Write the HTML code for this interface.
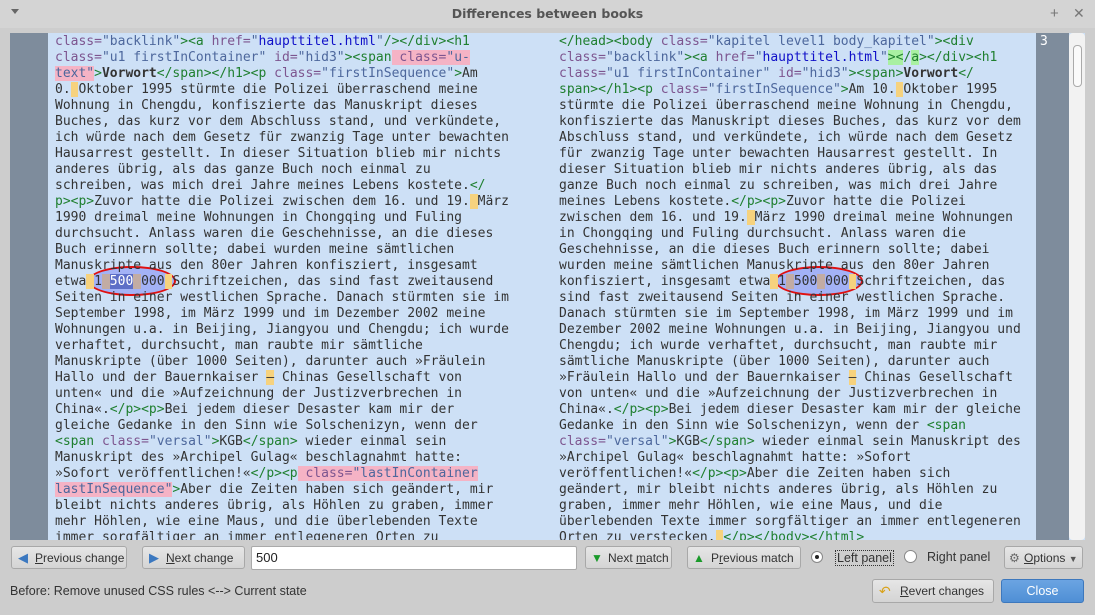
<!DOCTYPE html>
<html><head><meta charset="utf-8">
<style>
body{margin:0;width:1095px;height:615px;background:#cdcdcd;font-family:"Liberation Sans",sans-serif;overflow:hidden;position:relative}
.title{position:absolute;left:0;top:0;width:1095px;height:28px;background:#d4d4d4;text-align:center;font:bold 12.5px "DejaVu Sans",sans-serif;color:#555;line-height:27px}
.ed{position:absolute;left:10px;top:33px;width:1075px;height:507px;background:#cde0f6;overflow:hidden}
.g{position:absolute;top:0;height:507px;background:#7e8c9c}
pre{position:absolute;top:1px;margin:0;font-family:"DejaVu Sans Mono",monospace;font-size:13px;line-height:16px;color:#333}
.t{color:#1f7f2f}.a{color:#7d558f}.s{color:#4d679c}.h{color:#1010c8}
.y{background:#f6d27e}.p{background:#f5b3c5}.gr{background:#a9f0a2}.tan{background:#c2aca4}.sel{background:#5e6fc7;color:#fff}
.ell{position:absolute;width:84px;height:26px;border:2px solid #e01010;border-radius:50%;background:rgba(130,140,245,.55)}
.btn{position:absolute;top:546px;height:23px;border:1px solid #a8a8a8;border-radius:3px;background:linear-gradient(#e6e6e6,#d4d4d4);font-size:12px;color:#333;line-height:22px;box-sizing:border-box;white-space:nowrap}
.lbl{position:absolute;font-size:12.5px;color:#333;white-space:nowrap}
</style></head><body>
<div class="title">Differences between books</div>
<div style="position:absolute;left:11px;top:9px;width:0;height:0;border-left:4px solid transparent;border-right:4px solid transparent;border-top:5px solid #666"></div>
<div style="position:absolute;left:1050px;top:5px;font-size:15px;color:#777">+</div>
<div style="position:absolute;left:1073px;top:5px;font-size:14px;color:#777">✕</div>
<div class="ed">
<div class="g" style="left:0;width:38px"></div>
<div class="g" style="left:1026px;width:33px"><span style="position:absolute;left:4px;top:1px;color:#fff;font:13px 'DejaVu Sans Mono',monospace">3</span></div>
<div style="position:absolute;left:1059px;top:0;width:16px;height:507px;background:#f2f2f2;border-radius:4px"><div style="position:absolute;left:4px;top:12px;width:7px;height:40px;border:1px solid #aaa;border-radius:4px;background:#fafafa"></div></div>
<div class="ell" style="left:78px;top:233px"></div>
<div class="ell" style="left:765px;top:233px"></div>
<pre style="left:45px"><span class="a">class=</span><span class="s">"backlink"</span><span class="t">&gt;&lt;a</span> <span class="a">href=</span><span class="s">"</span><span class="h">haupttitel.html</span><span class="s">"</span><span class="t">/&gt;&lt;/div&gt;&lt;h1</span>
<span class="a">class=</span><span class="s">"u1 firstInContainer"</span> <span class="a">id=</span><span class="s">"hid3"</span><span class="t">&gt;&lt;span</span><span class="p"> <span class="a">class=</span><span class="s">"u-</span></span>
<span class="p"><span class="s">text"</span></span><span class="t">&gt;</span><b>Vorwort</b><span class="t">&lt;/span&gt;&lt;/h1&gt;&lt;p</span> <span class="a">class=</span><span class="s">"firstInSequence"</span><span class="t">&gt;</span>Am
0.<span class="y"> </span>Oktober 1995 stürmte die Polizei überraschend meine
Wohnung in Chengdu, konfiszierte das Manuskript dieses
Buches, das kurz vor dem Abschluss stand, und verkündete,
ich würde nach dem Gesetz für zwanzig Tage unter bewachten
Hausarrest gestellt. In dieser Situation blieb mir nichts
anderes übrig, als das ganze Buch noch einmal zu
schreiben, was mich drei Jahre meines Lebens kostete.<span class="t">&lt;/</span>
<span class="t">p&gt;&lt;p&gt;</span>Zuvor hatte die Polizei zwischen dem 16. und 19.<span class="y"> </span>März
1990 dreimal meine Wohnungen in Chongqing und Fuling
durchsucht. Anlass waren die Geschehnisse, an die dieses
Buch erinnern sollte; dabei wurden meine sämtlichen
Manuskripte aus den 80er Jahren konfisziert, insgesamt
etwa<span class="y"> </span>1<span class="tan"> </span><span class="sel">500</span><span class="tan"> </span>000<span class="y"> </span>Schriftzeichen, das sind fast zweitausend
Seiten in einer westlichen Sprache. Danach stürmten sie im
September 1998, im März 1999 und im Dezember 2002 meine
Wohnungen u.a. in Beijing, Jiangyou und Chengdu; ich wurde
verhaftet, durchsucht, man raubte mir sämtliche
Manuskripte (über 1000 Seiten), darunter auch »Fräulein
Hallo und der Bauernkaiser <span class="y">–</span> Chinas Gesellschaft von
unten« und die »Aufzeichnung der Justizverbrechen in
China«.<span class="t">&lt;/p&gt;&lt;p&gt;</span>Bei jedem dieser Desaster kam mir der
gleiche Gedanke in den Sinn wie Solschenizyn, wenn der
<span class="t">&lt;span</span> <span class="a">class=</span><span class="s">"versal"</span><span class="t">&gt;</span>KGB<span class="t">&lt;/span&gt;</span> wieder einmal sein
Manuskript des »Archipel Gulag« beschlagnahmt hatte:
»Sofort veröffentlichen!«<span class="t">&lt;/p&gt;&lt;p</span><span class="p"> <span class="a">class=</span><span class="s">"lastInContainer</span></span>
<span class="p"><span class="s">lastInSequence"</span></span><span class="t">&gt;</span>Aber die Zeiten haben sich geändert, mir
bleibt nichts anderes übrig, als Höhlen zu graben, immer
mehr Höhlen, wie eine Maus, und die überlebenden Texte
immer sorgfältiger an immer entlegeneren Orten zu</pre>
<pre style="left:549px"><span class="t">&lt;/head&gt;&lt;body</span> <span class="a">class=</span><span class="s">"kapitel level1 body_kapitel"</span><span class="t">&gt;&lt;div</span>
<span class="a">class=</span><span class="s">"backlink"</span><span class="t">&gt;&lt;a</span> <span class="a">href=</span><span class="s">"</span><span class="h">haupttitel.html</span><span class="s">"</span><span class="t gr">&gt;&lt;</span><span class="t">/</span><span class="t gr">a</span><span class="t">&gt;&lt;/div&gt;&lt;h1</span>
<span class="a">class=</span><span class="s">"u1 firstInContainer"</span> <span class="a">id=</span><span class="s">"hid3"</span><span class="t">&gt;&lt;span&gt;</span><b>Vorwort</b><span class="t">&lt;/</span>
<span class="t">span&gt;&lt;/h1&gt;&lt;p</span> <span class="a">class=</span><span class="s">"firstInSequence"</span><span class="t">&gt;</span>Am 10.<span class="y"> </span>Oktober 1995
stürmte die Polizei überraschend meine Wohnung in Chengdu,
konfiszierte das Manuskript dieses Buches, das kurz vor dem
Abschluss stand, und verkündete, ich würde nach dem Gesetz
für zwanzig Tage unter bewachten Hausarrest gestellt. In
dieser Situation blieb mir nichts anderes übrig, als das
ganze Buch noch einmal zu schreiben, was mich drei Jahre
meines Lebens kostete.<span class="t">&lt;/p&gt;&lt;p&gt;</span>Zuvor hatte die Polizei
zwischen dem 16. und 19.<span class="y"> </span>März 1990 dreimal meine Wohnungen
in Chongqing und Fuling durchsucht. Anlass waren die
Geschehnisse, an die dieses Buch erinnern sollte; dabei
wurden meine sämtlichen Manuskripte aus den 80er Jahren
konfisziert, insgesamt etwa<span class="y"> </span>1<span class="tan"> </span>500<span class="tan"> </span>000<span class="y"> </span>Schriftzeichen, das
sind fast zweitausend Seiten in einer westlichen Sprache.
Danach stürmten sie im September 1998, im März 1999 und im
Dezember 2002 meine Wohnungen u.a. in Beijing, Jiangyou und
Chengdu; ich wurde verhaftet, durchsucht, man raubte mir
sämtliche Manuskripte (über 1000 Seiten), darunter auch
»Fräulein Hallo und der Bauernkaiser <span class="y">–</span> Chinas Gesellschaft
von unten« und die »Aufzeichnung der Justizverbrechen in
China«.<span class="t">&lt;/p&gt;&lt;p&gt;</span>Bei jedem dieser Desaster kam mir der gleiche
Gedanke in den Sinn wie Solschenizyn, wenn der <span class="t">&lt;span</span>
<span class="a">class=</span><span class="s">"versal"</span><span class="t">&gt;</span>KGB<span class="t">&lt;/span&gt;</span> wieder einmal sein Manuskript des
»Archipel Gulag« beschlagnahmt hatte: »Sofort
veröffentlichen!«<span class="t">&lt;/p&gt;&lt;p&gt;</span>Aber die Zeiten haben sich
geändert, mir bleibt nichts anderes übrig, als Höhlen zu
graben, immer mehr Höhlen, wie eine Maus, und die
überlebenden Texte immer sorgfältiger an immer entlegeneren
Orten zu verstecken.<span class="y"> </span><span class="t">&lt;/p&gt;&lt;/body&gt;&lt;/html&gt;</span></pre>
</div>
<div class="btn" style="left:11px;width:116px;padding-left:23px"><span style="position:absolute;left:6px;top:0;color:#3b78c0;font-size:13px">◀</span><u>P</u>revious change</div>
<div class="btn" style="left:142px;width:103px;padding-left:23px"><span style="position:absolute;left:6px;top:0;color:#3b78c0;font-size:13px">▶</span><u>N</u>ext change</div>
<div style="position:absolute;left:251px;top:546px;width:326px;height:24px;background:#fff;border:1px solid #aaa;border-radius:2px;box-sizing:border-box;font-size:13px;line-height:22px;padding-left:4px;color:#222">500</div>
<div class="btn" style="left:585px;width:87px;padding-left:22px"><span style="position:absolute;left:5px;top:0;color:#1a9a2a;font-size:12px">▼</span>Next <u>m</u>atch</div>
<div class="btn" style="left:687px;width:114px;padding-left:23px"><span style="position:absolute;left:5px;top:0;color:#1a9a2a;font-size:12px">▲</span>P<u>r</u>evious match</div>
<div style="position:absolute;left:811px;top:551px;width:12px;height:12px;border:1px solid #888;border-radius:50%;background:#fff;box-sizing:border-box"><div style="position:absolute;left:3px;top:3px;width:4px;height:4px;border-radius:50%;background:#222"></div></div>
<div class="lbl" style="left:835px;top:550px;border:1px dotted #333;padding:0 1px">Left panel</div>
<div style="position:absolute;left:904px;top:550px;width:13px;height:13px;border:1px solid #888;border-radius:50%;background:#fff;box-sizing:border-box"></div>
<div class="lbl" style="left:927px;top:550px">Right panel</div>
<div class="btn" style="left:1004px;width:79px;padding-left:19px"><span style="position:absolute;left:4px;top:0;color:#666">⚙</span><u>O</u>ptions <span style="font-size:9px;color:#555">▼</span></div>
<div class="lbl" style="left:10px;top:584px">Before: Remove unused CSS rules &lt;--&gt; Current state</div>
<div class="btn" style="left:872px;top:579px;width:122px;height:24px;padding-left:27px"><span style="position:absolute;left:6px;top:0;color:#d9a21a;font-size:14px">↶</span><u>R</u>evert changes</div>
<div class="btn" style="left:1001px;top:579px;width:83px;height:24px;background:linear-gradient(#6ba4e2,#4f8fd5);border-color:#3d78bd;color:#fff;text-align:center;font-size:12.5px">Close</div>
</body></html>
